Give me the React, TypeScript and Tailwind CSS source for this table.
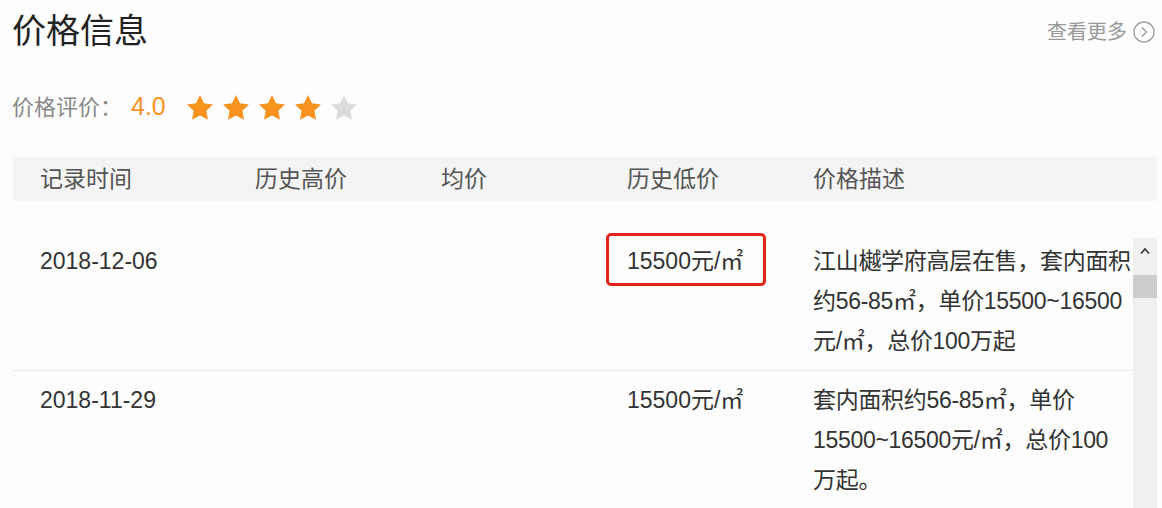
import React from 'react';

const font = { fontFamily: '"Liberation Sans", "Noto Sans CJK SC", sans-serif' };

const Star = ({ on }: { on: boolean }) => (
  <svg width="28" height="27" viewBox="0 0 24 23">
    <path
      d="M12 0.8l3.4 7 7.7 1.1-5.6 5.4 1.3 7.7L12 18.4 5.2 22l1.3-7.7L0.9 8.9l7.7-1.1z"
      fill={on ? '#f7931e' : '#dcdcdc'}
    />
  </svg>
);

const rows = [
  {
    date: '2018-12-06',
    low: '15500元/㎡',
    marked: true,
    desc: ['江山樾学府高层在售，套内面积', '约56-85㎡，单价15500~16500', '元/㎡，总价100万起'],
  },
  {
    date: '2018-11-29',
    low: '15500元/㎡',
    marked: false,
    desc: ['套内面积约56-85㎡，单价', '15500~16500元/㎡，总价100', '万起。'],
  },
];

const App: React.FC = () => {
  return (
    <div className="w-[1162px] h-[508px] overflow-hidden bg-[#fdfdfd] text-[#333]" style={font}>
      {/* Title row */}
      <div className="flex items-center justify-between pl-[12px] pr-[7px] pt-[9px]">
        <h2 className="text-[34px] leading-[44px] text-[#222]">价格信息</h2>
        <a className="flex items-center gap-[6px] text-[20px] text-[#999] mt-[2px]">
          查看更多
          <svg width="22" height="22" viewBox="0 0 22 22">
            <circle cx="11" cy="11" r="10" fill="none" stroke="#a0a0a0" strokeWidth="1.4" />
            <path d="M9 6.5l4.5 4.5L9 15.5" fill="none" stroke="#a0a0a0" strokeWidth="1.5" />
          </svg>
        </a>
      </div>

      {/* Rating */}
      <div className="flex items-center h-[40px] mt-[34px] pl-[12px]">
        <span className="text-[22px] text-[#888]">价格评价：</span>
        <span className="text-[25px] text-[#f7931e] ml-[9px] mr-[20px]">4.0</span>
        <div className="flex gap-[8px]">
          {[1, 2, 3, 4, 5].map((i) => (
            <Star key={i} on={i <= 4} />
          ))}
        </div>
      </div>

      {/* Table header */}
      <div className="ml-[13px] mr-[5px] mt-[30px] h-[44px] bg-[#f4f4f4] grid grid-cols-[215px_186px_186px_186px_minmax(0,1fr)] items-center text-[23px] text-[#555]">
        <div className="pl-[27px]">记录时间</div>
        <div className="pl-[27px]">历史高价</div>
        <div className="pl-[27px]">均价</div>
        <div className="pl-[27px]">历史低价</div>
        <div className="pl-[27px]">价格描述</div>
      </div>

      {/* Table body */}
      <div className="ml-[13px] mr-[5px] mt-[31px] flex">
        <div className="flex-1 min-w-0">
          {rows.map((r, idx) => (
            <div
              key={r.date}
              className={`grid grid-cols-[215px_186px_186px_186px_minmax(0,1fr)] py-[9px] text-[23px] leading-[40px] ${
                idx > 0 ? 'border-t border-[#ececec]' : ''
              }`}
            >
              <div className="pl-[27px]">{r.date}</div>
              <div />
              <div />
              <div className="pl-[27px]">
                <span className="relative inline-block">
                  {r.low}
                  {r.marked && (
                    <span className="absolute left-[-21px] top-[-8px] w-[160px] h-[53px] border-[3px] border-[#e5231b] rounded-[5px]" />
                  )}
                </span>
              </div>
              <div className="pl-[27px] whitespace-nowrap tracking-[-0.3px]">
                {r.desc.map((l) => (
                  <div key={l}>{l}</div>
                ))}
              </div>
            </div>
          ))}
        </div>
        {/* Scrollbar */}
        <div className="relative z-10 shrink-0 w-[24px] mt-[6px] bg-[#f0f0f0] flex flex-col items-center h-[300px]">
          <div className="h-[25px] w-full flex items-center justify-center">
            <svg width="10" height="8" viewBox="0 0 10 8">
              <path d="M1 6.5L5 2l4 4.5" fill="none" stroke="#333" strokeWidth="1.6" />
            </svg>
          </div>
          <div className="w-full h-[23px] mt-[12px] bg-[#cdcdcd]" />
        </div>
      </div>
    </div>
  );
};

export default App;
